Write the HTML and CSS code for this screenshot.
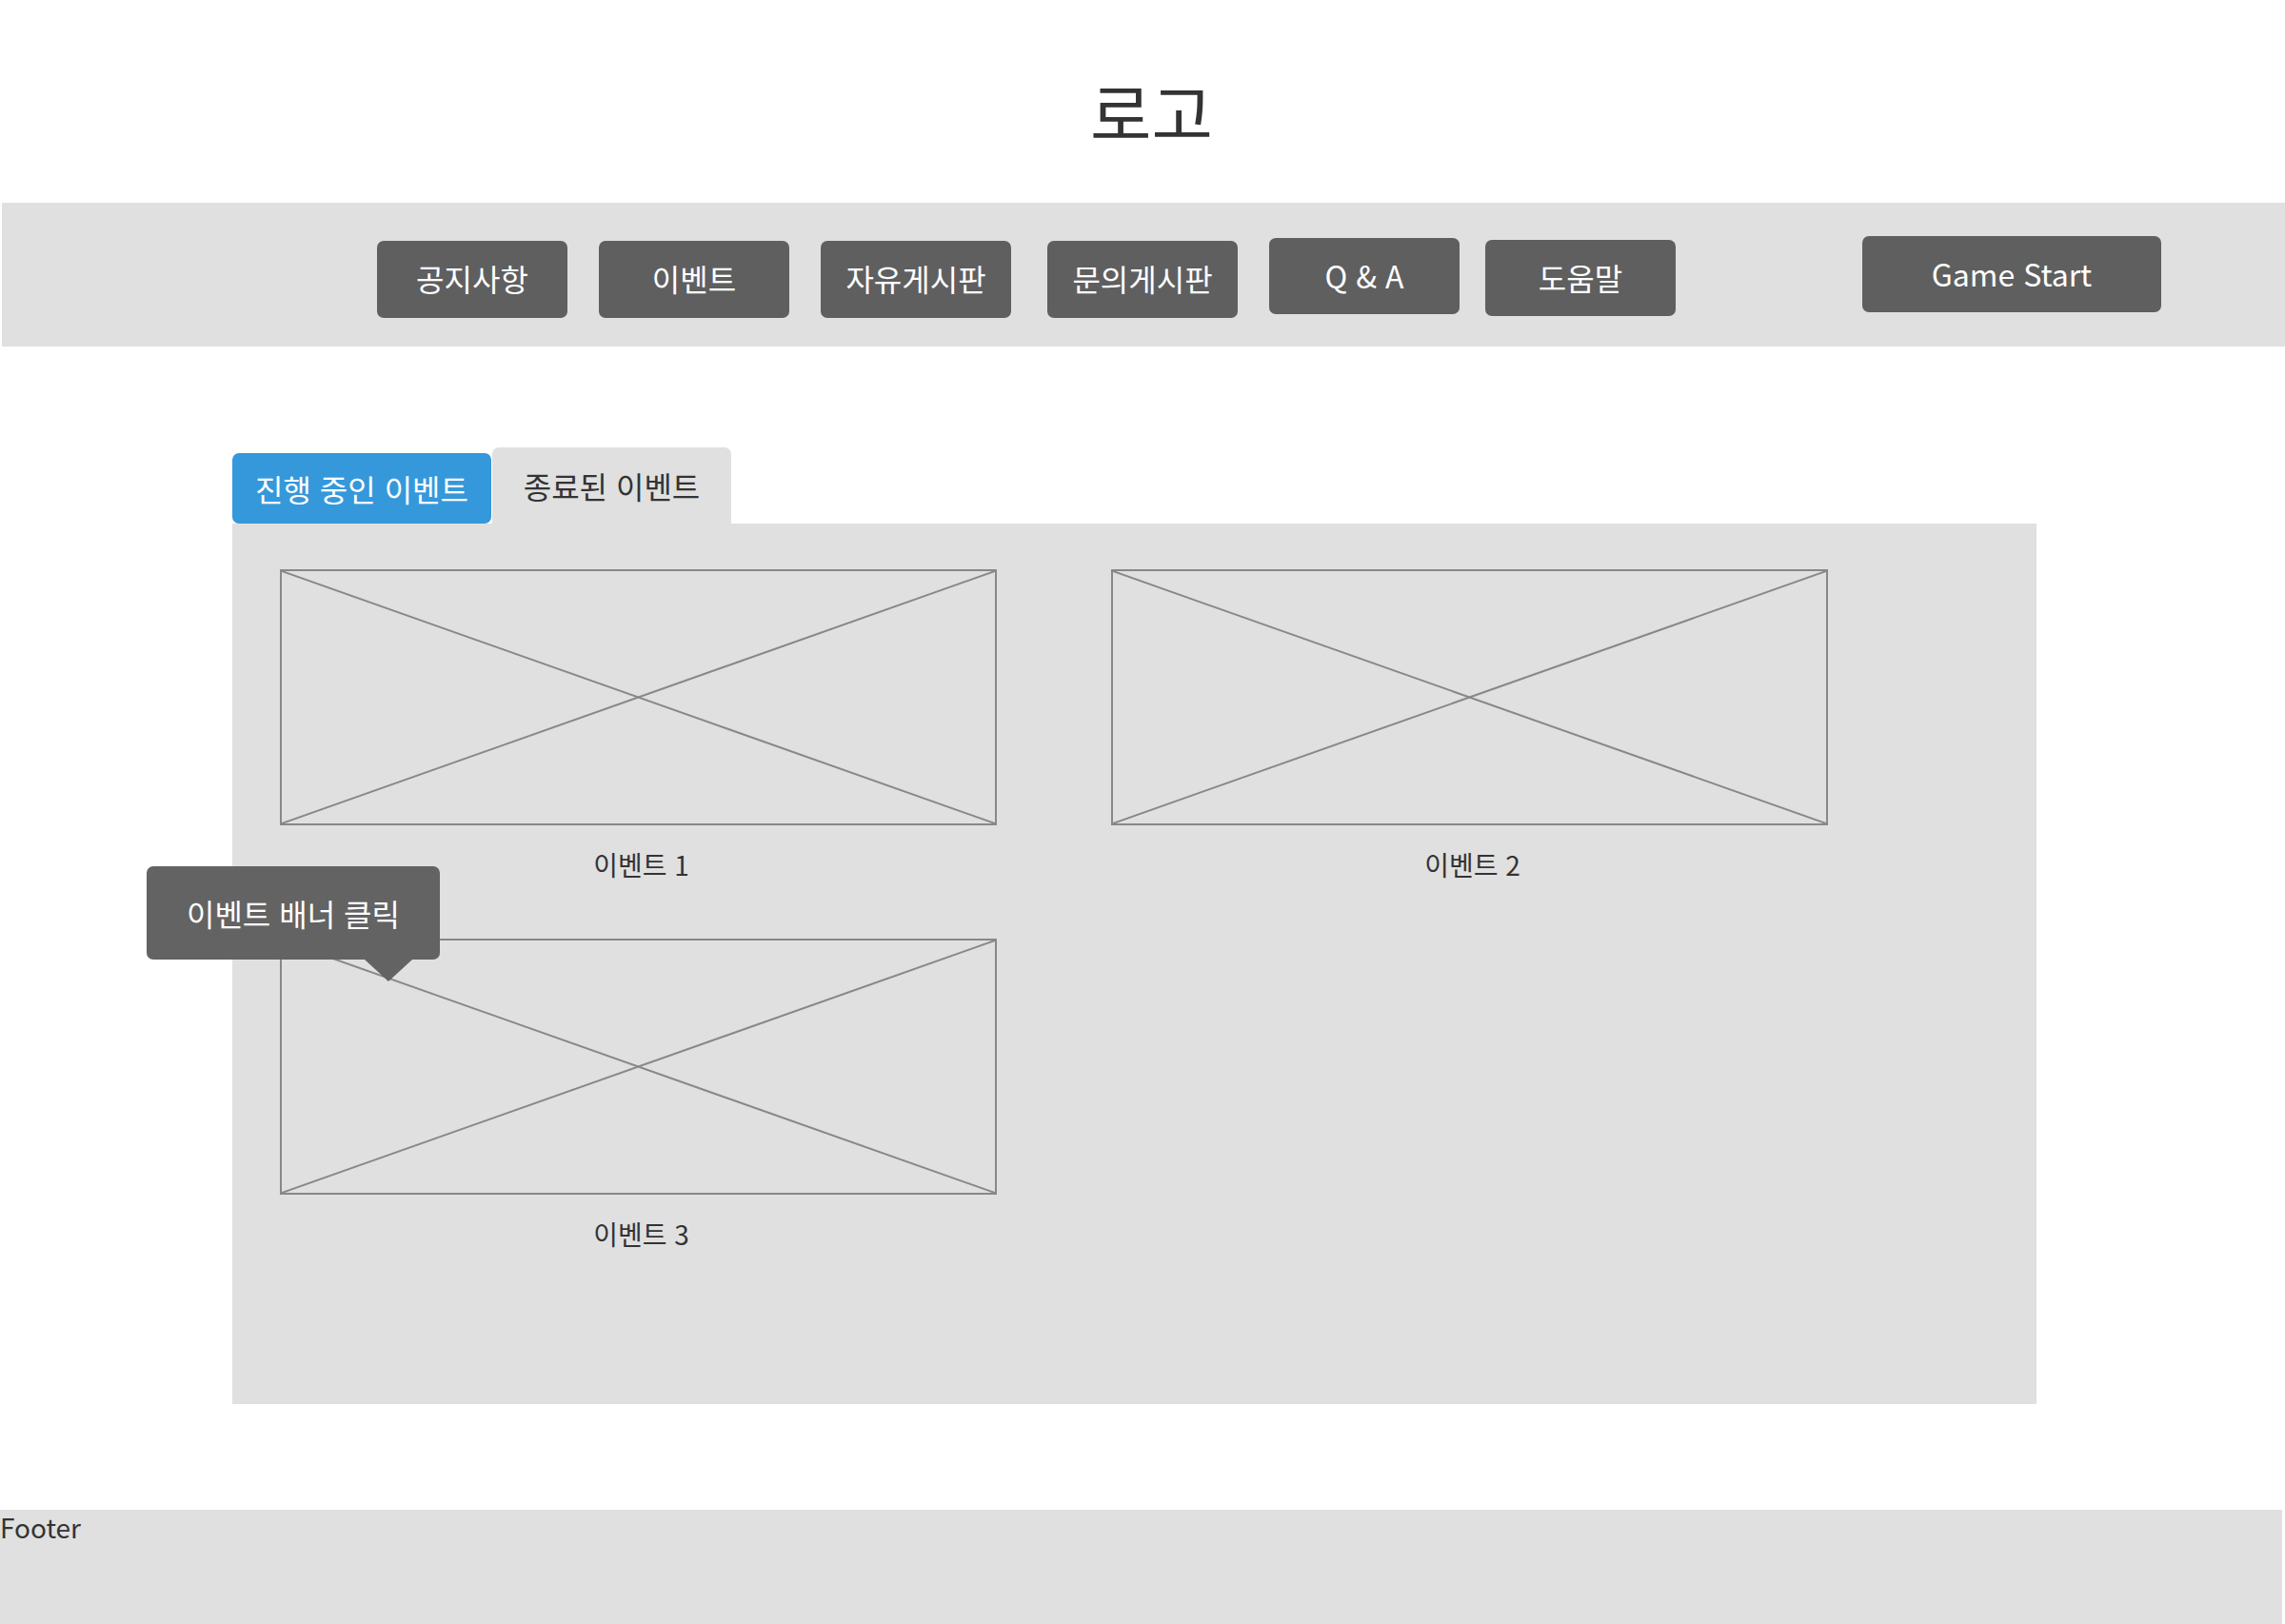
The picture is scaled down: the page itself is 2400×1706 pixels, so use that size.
FILE: index.html
```html
<!DOCTYPE html>
<html lang="ko">
<head>
<meta charset="utf-8">
<title>이벤트</title>
<link rel="stylesheet" href="styles.css">
</head>
<body>
<header class="header">
  <div class="logo">로고</div>
</header>
<nav class="nav">
  <a class="nav-btn">공지사항</a>
  <a class="nav-btn">이벤트</a>
  <a class="nav-btn">자유게시판</a>
  <a class="nav-btn nav-btn--wide-gap">문의게시판</a>
  <a class="nav-btn nav-btn--up">Q &amp; A</a>
  <a class="nav-btn nav-btn--up1">도움말</a>
  <a class="nav-btn nav-btn--start">Game Start</a>
</nav>
<main class="main">
  <div class="tabs">
    <div class="tab tab--active">진행 중인 이벤트</div>
    <div class="tab">종료된 이벤트</div>
  </div>
  <section class="panel">
    <div class="grid">
      <div class="card">
        <div class="thumb">
          <svg class="thumb-x" viewBox="0 0 100 100" preserveAspectRatio="none"><line x1="0" y1="0" x2="100" y2="100"/><line x1="100" y1="0" x2="0" y2="100"/></svg>
        </div>
        <div class="card-label">이벤트 1</div>
      </div>
      <div class="card">
        <div class="thumb">
          <svg class="thumb-x" viewBox="0 0 100 100" preserveAspectRatio="none"><line x1="0" y1="0" x2="100" y2="100"/><line x1="100" y1="0" x2="0" y2="100"/></svg>
        </div>
        <div class="card-label">이벤트 2</div>
      </div>
      <div class="card">
        <div class="thumb">
          <svg class="thumb-x" viewBox="0 0 100 100" preserveAspectRatio="none"><line x1="0" y1="0" x2="100" y2="100"/><line x1="100" y1="0" x2="0" y2="100"/></svg>
        </div>
        <div class="card-label">이벤트 3</div>
      </div>
    </div>
    <div class="tooltip">이벤트 배너 클릭</div>
  </section>
</main>
<footer class="footer">Footer</footer>
</body>
</html>
```
FILE: styles.css
```css
* { box-sizing: border-box; }
html, body {
  margin: 0;
  padding: 0;
  background: #ffffff;
}
body {
  font-family: "Noto Sans CJK KR", "Noto Sans", sans-serif;
  color: #333333;
  width: 2400px;
  height: 1706px;
  overflow: hidden;
}

.header {
  height: 213px;
  padding-top: 77px;
  padding-left: 19px;
  text-align: center;
}
.logo {
  font-size: 70px;
  line-height: 80px;
  color: #333333;
}

.nav {
  margin-left: 2px;
  height: 151px;
  background: #e0e0e0;
  display: flex;
  align-items: flex-start;
  gap: 33px;
  padding-top: 40px;
  padding-left: 394px;
}
.nav-btn {
  width: 200px;
  height: 81px;
  padding-bottom: 3px;
  background: #5f5f5f;
  color: #ffffff;
  border-radius: 7px;
  font-size: 32px;
  display: flex;
  align-items: center;
  justify-content: center;
}
.nav-btn--wide-gap { margin-left: 5px; }
.nav-btn--up { margin-top: -3px; height: 80px; }
.nav-btn--up1 { margin-top: -1px; height: 80px; margin-left: -6px; }
.nav-btn--start {
  width: 314px;
  height: 80px;
  margin-top: -5px;
  margin-left: 163px;
}

.main {
  padding-top: 106px;
}
.tabs {
  display: flex;
  align-items: flex-end;
  padding-left: 244px;
}
.tab {
  width: 251px;
  height: 80px;
  background: #e0e0e0;
  border-radius: 7px 7px 0 0;
  font-size: 32px;
  color: #333333;
  display: flex;
  align-items: center;
  justify-content: center;
  margin-left: 1px;
}
.tab--active {
  width: 272px;
  height: 74px;
  background: #3598db;
  color: #ffffff;
  border-radius: 7px;
  margin-left: 0;
}

.panel {
  position: relative;
  margin-left: 244px;
  width: 1895px;
  height: 925px;
  background: #e0e0e0;
  padding: 48px 0 0 50px;
}
.grid {
  display: grid;
  grid-template-columns: 753px 753px;
  column-gap: 120px;
  row-gap: 60px;
}
.card {
  display: flex;
  flex-direction: column;
}
.thumb {
  width: 753px;
  height: 269px;
  border: 2px solid #888888;
}
.thumb-x {
  display: block;
  width: 100%;
  height: 100%;
}
.thumb-x line {
  stroke: #888888;
  stroke-width: 2;
  vector-effect: non-scaling-stroke;
}
.card-label {
  margin-top: 23px;
  font-size: 28px;
  line-height: 36px;
  text-align: center;
  color: #333333;
  padding-left: 6px;
}

.tooltip {
  position: absolute;
  left: -90px;
  top: 360px;
  width: 308px;
  height: 98px;
  background: #636363;
  color: #ffffff;
  border-radius: 7px;
  font-size: 32px;
  display: flex;
  align-items: center;
  justify-content: center;
}
.tooltip::after {
  content: "";
  position: absolute;
  left: 229px;
  top: 98px;
  border-left: 25px solid transparent;
  border-right: 25px solid transparent;
  border-top: 23px solid #636363;
}

.footer {
  margin-top: 111px;
  width: 2397px;
  height: 120px;
  background: #e0e0e0;
  font-size: 28px;
  line-height: 36px;
  color: #333333;
}
```
